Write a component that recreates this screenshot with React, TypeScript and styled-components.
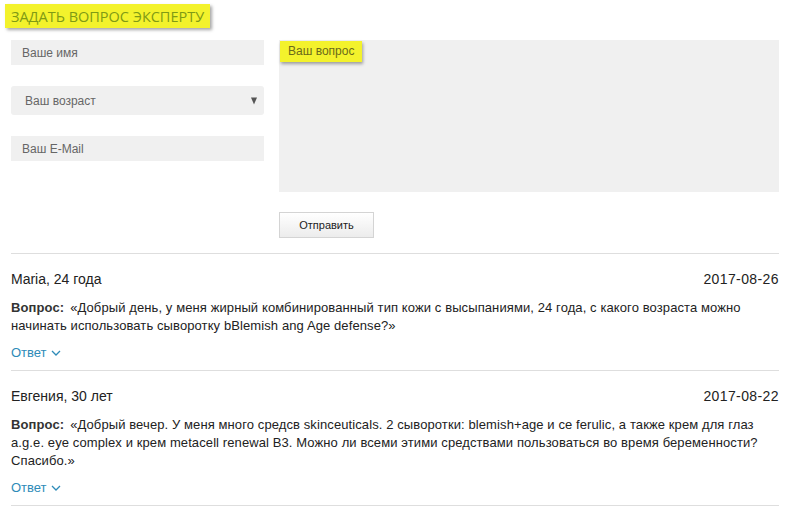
import React from 'react';
import styled, { createGlobalStyle } from 'styled-components';

const GlobalStyle = createGlobalStyle`
  html, body {
    margin: 0;
    padding: 0;
    background: #fff;
  }
  body {
    font-family: "Liberation Sans", Arial, sans-serif;
    color: #222;
  }
`;

const Page = styled.div`
  padding: 4px 7px 0 11px;
`;

const Title = styled.h2`
  display: inline-block;
  margin: 0 0 0 -6px;
  padding: 3px 6px 2px 6px;
  background: #f3f22c;
  color: #7f9a14;
  font-family: "Open Sans", "Liberation Sans", sans-serif;
  font-weight: 400;
  font-size: 14.5px;
  line-height: 19px;
  box-shadow: 2px 2px 3px rgba(0, 0, 0, 0.35);
`;

const Form = styled.form`
  display: grid;
  grid-template-columns: 253px 1fr;
  column-gap: 15px;
  margin-top: 12px;
`;

const Fields = styled.div`
  display: flex;
  flex-direction: column;
  gap: 21px;
`;

const Field = styled.div<{ $tall?: boolean; $rounded?: boolean }>`
  position: relative;
  height: ${({ $tall }) => ($tall ? '29px' : '25px')};
  background: #f0f0f0;
  border-radius: ${({ $rounded }) => ($rounded ? '3px' : '0')};
  display: flex;
  align-items: center;
  padding-left: ${({ $rounded }) => ($rounded ? '14px' : '11px')};
  font-size: 12px;
  color: #666;
`;

const Caret = styled.span`
  position: absolute;
  right: 7px;
  top: 50%;
  transform: translateY(-50%);
  width: 0;
  height: 0;
  border-left: 3.5px solid transparent;
  border-right: 3.5px solid transparent;
  border-top: 7px solid #555;
`;

const QuestionColumn = styled.div`
  display: flex;
  flex-direction: column;
  align-items: flex-start;
`;

const TextArea = styled.div`
  position: relative;
  align-self: stretch;
  height: 152px;
  background: #f0f0f0;
`;

const QuestionLabel = styled.span`
  position: absolute;
  left: 1px;
  top: 1px;
  padding: 3px 8px 4px 8px;
  background: #f3f22c;
  color: #6b6a1a;
  font-size: 12px;
  line-height: 14px;
  box-shadow: 1px 2px 3px rgba(0, 0, 0, 0.35);
`;

const SubmitButton = styled.button`
  margin-top: 20px;
  width: 95px;
  height: 26px;
  border: 1px solid #d4d4d4;
  background: linear-gradient(#ffffff, #ececec);
  font-family: "Liberation Sans", Arial, sans-serif;
  font-size: 11px;
  color: #222;
  padding: 0;
`;

const List = styled.div`
  margin-top: 15px;
  border-top: 1px solid #dedede;
`;

const Item = styled.div`
  display: flex;
  flex-direction: column;
  align-items: flex-start;
  border-bottom: 1px solid #dedede;
  padding: 16px 0 8px 0;
  font-family: "Liberation Sans", Arial, sans-serif;
  font-size: 13px;
  color: #222;
`;

const ItemHead = styled.div`
  align-self: stretch;
  display: flex;
  justify-content: space-between;
  font-size: 14px;
  line-height: 18px;
  margin-bottom: 11px;
`;

const Date = styled.span`
  font-size: 14px;
  letter-spacing: 0.4px;
`;

const Question = styled.p`
  margin: 0;
  line-height: 18px;
  letter-spacing: 0.1px;
`;

const Label = styled.b`
  font-weight: 700;
  color: #333;
  margin-right: 6px;
`;

const AnswerToggle = styled.a`
  display: flex;
  align-items: center;
  gap: 4px;
  margin-top: 9px;
  color: #2e8bb8;
  font-size: 13px;
  line-height: 18px;
  cursor: pointer;
`;

const items = [
  {
    name: 'Maria, 24 года',
    date: '2017-08-26',
    text: '«Добрый день, у меня жирный комбинированный тип кожи с высыпаниями, 24 года, с какого возраста можно начинать использовать сыворотку bBlemish ang Age defense?»',
  },
  {
    name: 'Евгения, 30 лет',
    date: '2017-08-22',
    text: '«Добрый вечер. У меня много средсв skinceuticals. 2 сыворотки: blemish+age и ce ferulic, а также крем для глаз a.g.e. eye complex и крем metacell renewal B3. Можно ли всеми этими средствами пользоваться во время беременности? Спасибо.»',
  },
];

const Chevron = () => (
  <svg width="10" height="6" viewBox="0 0 10 6" fill="none">
    <path d="M1 1l4 4 4-4" stroke="#2e8bb8" strokeWidth="1.3" />
  </svg>
);

export default function App() {
  return (
    <>
      <GlobalStyle />
      <Page>
        <Title>ЗАДАТЬ ВОПРОС ЭКСПЕРТУ</Title>
        <Form onSubmit={(e) => e.preventDefault()}>
          <Fields>
            <Field>Ваше имя</Field>
            <Field $tall $rounded>
              Ваш возраст
              <Caret />
            </Field>
            <Field>Ваш E-Mail</Field>
          </Fields>
          <QuestionColumn>
            <TextArea>
              <QuestionLabel>Ваш вопрос</QuestionLabel>
            </TextArea>
            <SubmitButton type="submit">Отправить</SubmitButton>
          </QuestionColumn>
        </Form>
        <List>
          {items.map((it) => (
            <Item key={it.date}>
              <ItemHead>
                <span>{it.name}</span>
                <Date>{it.date}</Date>
              </ItemHead>
              <Question>
                <Label>Вопрос:</Label>
                <span>{it.text}</span>
              </Question>
              <AnswerToggle>
                Ответ <Chevron />
              </AnswerToggle>
            </Item>
          ))}
        </List>
      </Page>
    </>
  );
}
